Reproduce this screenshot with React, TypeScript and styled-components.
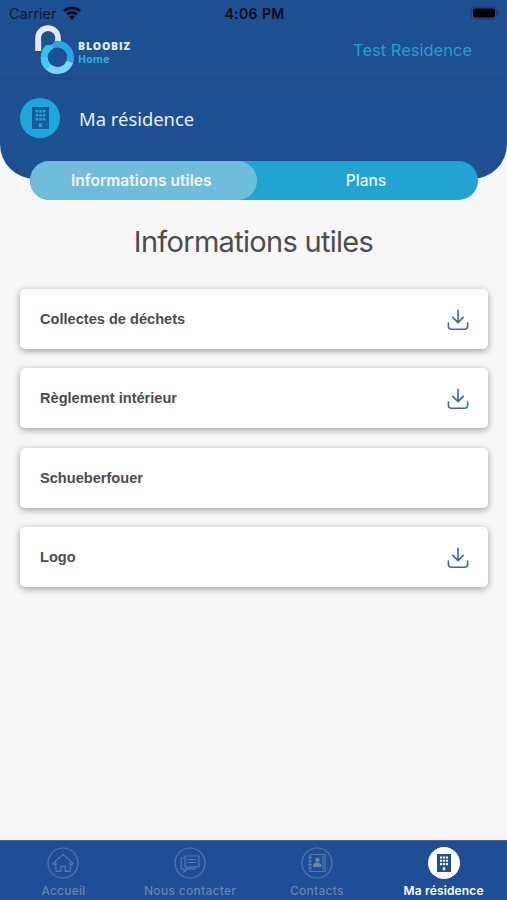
import React from "react";
import styled, { createGlobalStyle } from "styled-components";

const Global = createGlobalStyle`
  * { box-sizing: border-box; }
  body { margin: 0; background: #f7f7f7; font-family: Inter, sans-serif; }
`;

const Screen = styled.div`
  width: 507px;
  height: 900px;
  display: flex;
  flex-direction: column;
  background: #f7f7f7;
  overflow: hidden;
`;

const Label = styled.span<{ $size: number; $color: string; $weight?: number; $spacing?: number; $font?: string }>`
  display: block;
  white-space: nowrap;
  font-family: ${(p) => p.$font ?? "Inter"}, sans-serif;
  font-size: ${(p) => p.$size}px;
  font-weight: ${(p) => p.$weight ?? 400};
  letter-spacing: ${(p) => p.$spacing ?? 0}px;
  line-height: 1.2;
  color: ${(p) => p.$color};
`;

const Header = styled.header`
  height: 79px;
  flex: none;
  background: #1d5091;
  border-bottom: 1px solid #1a4781;
`;

const StatusBar = styled.div`
  height: 24px;
  display: grid;
  grid-template-columns: 1fr auto 1fr;
  align-items: center;
  padding: 4px 7px 0 9px;
`;

const Carrier = styled.div`
  display: flex;
  align-items: center;
  gap: 6px;
`;

const WifiIcon = styled.svg`
  margin-bottom: 2px;
`;

const Battery = styled.svg`
  justify-self: end;
  margin-bottom: 2px;
`;

const BrandRow = styled.div`
  height: 54px;
  display: flex;
  justify-content: space-between;
  padding: 0 35px 0 34px;
`;

const Brand = styled.div`
  display: flex;
  gap: 3px;
`;

const BrandName = styled.div`
  padding-top: 16px;
  display: flex;
  flex-direction: column;
`;

const Residence = styled.div`
  padding-top: 17px;
`;

const Hero = styled.section`
  height: 100px;
  flex: none;
  background: #1d5091;
  border-radius: 0 0 35px 35px;
  display: flex;
  align-items: flex-start;
  gap: 19px;
  padding: 19px 20px;
`;

const HeroIcon = styled.div`
  width: 40px;
  height: 40px;
  border-radius: 50%;
  background: #1ba9da;
  display: flex;
  align-items: center;
  justify-content: center;
`;

const HeroTitle = styled.div`
  padding-top: 10px;
`;

const Tabs = styled.nav`
  flex: none;
  height: 39px;
  margin: -18.5px 30px 0;
  width: 447.5px;
  display: flex;
  border-radius: 20px;
  background: #22a4d3;
  z-index: 1;
`;

const Tab = styled.button<{ $active?: boolean }>`
  border: 0;
  width: ${(p) => (p.$active ? 226.5 : 221)}px;
  display: flex;
  align-items: center;
  justify-content: center;
  border-radius: 20px;
  background: ${(p) => (p.$active ? "#70bddb" : "transparent")};
  padding: 3px ${(p) => (p.$active ? 4 : 2)}px 0 0;
`;

const Title = styled.h1`
  margin: 25px 0 0;
  height: 35px;
  display: flex;
  justify-content: center;
`;

const List = styled.main`
  flex: 1;
  padding: 29px 19.5px 0 20px;
  display: flex;
  flex-direction: column;
  gap: 19.5px;
`;

const Card = styled.article`
  height: 60px;
  border-radius: 5px;
  background: #fff;
  box-shadow: 0 2px 7px rgba(0, 0, 0, 0.36);
  display: flex;
  align-items: center;
  justify-content: space-between;
  padding: 2px 18.5px 0 20px;
`;

const Bar = styled.nav`
  height: 60px;
  flex: none;
  display: grid;
  grid-template-columns: repeat(4, 1fr);
  background: #1d4e96;
  border-top: 1px solid #3c689f;
`;

const BarItem = styled.a`
  display: flex;
  flex-direction: column;
  align-items: center;
  padding: 6px 0 0;
  gap: 5px;
`;

const Building = ({ width, height, body, holes }: { width: number; height: number; body: string; holes: string }) => (
  <svg width={width} height={height} viewBox="0 0 16 22" preserveAspectRatio="none">
    <path fill={body} d="M0 0h16v22H0z" />
    <path
      fill={holes}
      d="M3.4 3h2.4v2.6H3.4zM6.8 3h2.4v2.6H6.8zM10.2 3h2.4v2.6h-2.4zM3.4 7h2.4v2.6H3.4zM6.8 7h2.4v2.6H6.8zM10.2 7h2.4v2.6h-2.4zM3.4 11h2.4v2.6H3.4zM6.8 11h2.4v2.6H6.8zM10.2 11h2.4v2.6h-2.4zM6.6 16.3h2.8V20H6.6z"
    />
  </svg>
);

const Download = () => (
  <svg width="22" height="22" viewBox="0 0 22 22" fill="none" stroke="#386ba8" strokeWidth="1.6" strokeLinecap="round" strokeLinejoin="round">
    <path d="M11 1.3v12.2M5.8 8.4l5.2 5.2 5.2-5.2M1.4 14v3.3c0 2 1 3 3 3h13.2c2 0 3-1 3-3V14" />
  </svg>
);

const Wifi = () => (
  <WifiIcon width="18" height="14" viewBox="0 0 18 14" fill="none" stroke="#030a14" strokeWidth="2.8">
    <path d="M1 5.1a11.3 11.3 0 0 1 16 0M4 8.4a7.1 7.1 0 0 1 10 0" />
    <path fill="#030a14" stroke="none" d="M9 13.8 5.9 10.7a4.4 4.4 0 0 1 6.2 0z" />
  </WifiIcon>
);

const Logo = () => (
  <svg width="41" height="50" viewBox="0 0 41 50" fill="none">
    <path d="M4.2 27V14a9.8 9.8 0 0 1 19.6 0v3" stroke="#e5e8fb" strokeWidth="6" />
    <circle cx="23.4" cy="33.4" r="13.2" stroke="#2ca3e5" strokeWidth="6.8" />
    <path d="M10.2 33.4a13.2 13.2 0 0 0 13.2 13.2c6 0 10.6-3.4 12.4-8.7" stroke="#7bd3f5" strokeWidth="6.8" />
    <path d="M10.2 33.4c0-5.7 3.3-10.1 7.7-12.1" stroke="#27c7ee" strokeWidth="6.8" />
    <path d="M10.2 33.4c0 4 1.6 7.4 4.3 9.9" stroke="#45c9f3" strokeWidth="6.8" />
    <circle cx="14.2" cy="14.2" r="7" fill="#1d5091" />
  </svg>
);

const ring = { width: 32, height: 32, viewBox: "0 0 32 32", fill: "none", stroke: "#5479ae", strokeWidth: 1.2 };

const Home = () => (
  <svg {...ring}>
    <circle cx="16" cy="16" r="15" />
    <path d="M5.8 16.7 16 7.4l10.2 9.3-1.4 1.1-1.7-1.4v7.9h-4.8v-5h-4.6v5H8.9v-7.9l-1.7 1.4z" />
  </svg>
);

const Chat = () => (
  <svg {...ring}>
    <circle cx="16" cy="16" r="15" />
    <path d="M11 9h14v10.8H15.5l-3 3v-3H11zM11 11H7.2v10.9H10V25l3.2-3.1h7.6v-2.1M13.5 12.5h9M13.5 15.5h9" />
  </svg>
);

const Book = () => (
  <svg {...ring}>
    <circle cx="16" cy="16" r="15" />
    <path d="M9 7.5h15v17H9zM7 10.5h4M7 14h4M7 17.5h4M7 21h4M22 9v14" />
    <circle cx="16.3" cy="12.7" r="2.3" fill="#6885ae" stroke="none" />
    <path fill="#6885ae" stroke="none" d="M12 20c.1-3 1.3-4 2.9-4.4h2.8c1.7.4 2.8 1.4 2.9 4.4z" />
  </svg>
);

const ActiveIcon = styled.div`
  width: 32px;
  height: 32px;
  border-radius: 50%;
  background: #fff;
  display: flex;
  align-items: center;
  justify-content: center;
`;

const documents = [
  { name: "Collectes de déchets", file: true },
  { name: "Règlement intérieur", file: true },
  { name: "Schueberfouer", file: false },
  { name: "Logo", file: true },
];

export default function App() {
  return (
    <Screen>
      <Global />
      <Header>
        <StatusBar>
          <Carrier>
            <Label $size={14.5} $color="#0a1a30">Carrier</Label>
            <Wifi />
          </Carrier>
          <Label $size={14} $weight={600} $spacing={0.4} $color="#030a14">4:06 PM</Label>
          <Battery width="30" height="14" viewBox="0 0 30 14">
            <rect x="1" y="1" width="25.5" height="12" rx="3.5" fill="none" stroke="#163c6d" />
            <rect x="3" y="2.5" width="22" height="9" rx="2" fill="#000" />
            <path d="M28 5c1.6.7 1.6 3.3 0 4z" fill="#163c6d" />
          </Battery>
        </StatusBar>
        <BrandRow>
          <Brand>
            <Logo />
            <BrandName>
              <Label $size={10.5} $weight={800} $spacing={0.8} $color="#e5ebfa" $font="Open Sans">BLOOBIZ</Label>
              <Label $size={10.5} $weight={700} $spacing={0.1} $color="#20b5e4" $font="Open Sans">Home</Label>
            </BrandName>
          </Brand>
          <Residence>
            <Label $size={16.5} $color="#249fce">Test Residence</Label>
          </Residence>
        </BrandRow>
      </Header>
      <Hero>
        <HeroIcon>
          <Building width={17} height={22} body="#1b5b9d" holes="#1ba9da" />
        </HeroIcon>
        <HeroTitle>
          <Label $size={18.4} $color="#e9eff8" $font="Noto Sans">Ma résidence</Label>
        </HeroTitle>
      </Hero>
      <Tabs>
        <Tab $active>
          <Label $size={15.5} $weight={600} $spacing={0.05} $color="#f5fbfe">Informations utiles</Label>
        </Tab>
        <Tab>
          <Label $size={15.5} $weight={500} $color="#e9f8fd">Plans</Label>
        </Tab>
      </Tabs>
      <Title>
        <Label $size={29} $spacing={-0.7} $color="#4d4d4d">Informations utiles</Label>
      </Title>
      <List>
        {documents.map((d) => (
          <Card key={d.name}>
            <Label $size={14.6} $weight={700} $color="#4c4c4c" $font="Liberation Sans">{d.name}</Label>
            {d.file && <Download />}
          </Card>
        ))}
      </List>
      <Bar>
        <BarItem>
          <Home />
          <Label $size={12} $weight={500} $spacing={0.2} $color="#6885ae">Accueil</Label>
        </BarItem>
        <BarItem>
          <Chat />
          <Label $size={12} $weight={500} $spacing={0.3} $color="#6885ae">Nous contacter</Label>
        </BarItem>
        <BarItem>
          <Book />
          <Label $size={12} $weight={500} $spacing={0.3} $color="#6885ae">Contacts</Label>
        </BarItem>
        <BarItem>
          <ActiveIcon>
            <Building width={14} height={18} body="#1d4e96" holes="#fff" />
          </ActiveIcon>
          <Label $size={12} $weight={600} $spacing={0.15} $color="#fff">Ma résidence</Label>
        </BarItem>
      </Bar>
    </Screen>
  );
}
